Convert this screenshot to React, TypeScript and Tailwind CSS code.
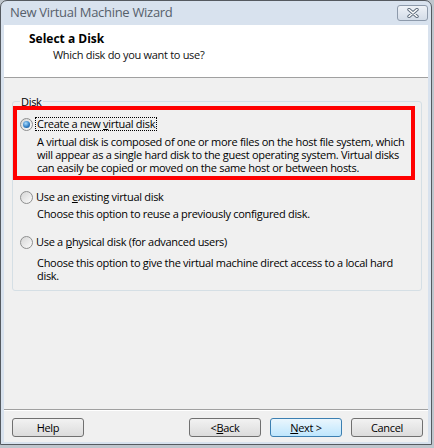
import React from "react";

const font = { fontFamily: '"Open Sans", "Noto Sans", sans-serif' };

function Radio({ checked }: { checked?: boolean }) {
  return (
    <span className="w-[13px] h-[13px] rounded-full border border-[#8e8f8f] bg-gradient-to-br from-[#d6d6d6] to-[#fbfbfb] flex items-center justify-center shrink-0">
      {checked && (
        <span className="w-[7px] h-[7px] rounded-full bg-[radial-gradient(circle_at_40%_35%,#a9dcff,#2a78c0_60%,#1d4f86)]" />
      )}
    </span>
  );
}

function Btn({ children, primary }: { children: React.ReactNode; primary?: boolean }) {
  return (
    <button
      className={`w-[72px] h-[19px] rounded-[3px] border text-[11px] tracking-[-0.3px] leading-none text-black flex items-center justify-center ${
        primary
          ? "border-[#3c7fb1] bg-gradient-to-b from-[#eaf6fd] to-[#bee6fd]"
          : "border-[#707070] bg-gradient-to-b from-[#f2f2f2] to-[#dcdcdc]"
      }`}
    >
      {children}
    </button>
  );
}

export default function App() {
  return (
    <div className="relative w-[434px] h-[448px] bg-[#bfc6cd] overflow-hidden" style={font}>
      <div className="w-[432px] h-[445px] rounded-t-[7px] border border-[#555a60] bg-[#d8e2ee] flex flex-col">
        {/* title bar */}
        <div className="h-[24px] flex items-center justify-between pl-[9px] pr-[3px]">
          <span className="text-[13px] tracking-[-0.3px] text-[#56606b]">New Virtual Machine Wizard</span>
          <span className="w-[31px] h-[16px] rounded-[3px] border border-[#8d9aab] bg-gradient-to-b from-[#eef2f7] to-[#d3dce8] flex items-center justify-center">
            <svg width="14" height="10" viewBox="0 0 14 10">
              <path d="M3 1.5 L11 8.5 M11 1.5 L3 8.5" stroke="#5d6b7b" strokeWidth="3.4" strokeLinecap="round" />
              <path d="M3 1.5 L11 8.5 M11 1.5 L3 8.5" stroke="#ffffff" strokeWidth="1.6" strokeLinecap="round" />
            </svg>
          </span>
        </div>

        <div className="flex-1 mx-[3px] mb-[2px] flex flex-col">
          {/* header */}
          <div className="h-[53px] bg-white border-b border-[#a0a0a0] pl-[25px] pt-[6px]">
            <div className="text-[12px] font-bold text-black leading-[16px]">Select a Disk</div>
            <div className="text-[11px] tracking-[-0.3px] text-[#111] leading-[16px] pl-[24px]">Which disk do you want to use?</div>
          </div>

          {/* body */}
          <div className="flex-1 bg-[#f0f0f0] flex flex-col text-[11px] tracking-[-0.3px] text-black">
            <fieldset className="mt-[17px] ml-[8px] mr-[6px] h-[196px] border border-[#d5dfe5] rounded-[3px] px-[7px] pb-[6px]">
              <legend className="px-[1px] leading-[13px]">Disk</legend>
              <div className="flex items-center gap-[2px] mt-[9px] h-[14px]">
                <Radio checked />
                <span className="border border-dotted border-black px-[1px] leading-[12px]">
                  Create a new <span className="underline">v</span>irtual disk
                </span>
              </div>
              <p className="pl-[17px] mt-[4px] leading-[13px] whitespace-nowrap">
                A virtual disk is composed of one or more files on the host file system, which
                <br />
                will appear as a single hard disk to the guest operating system. Virtual disks
                <br />
                can easily be copied or moved on the same host or between hosts.
              </p>

              <div className="flex items-center gap-[3px] mt-[16px] h-[14px]">
                <Radio />
                <span>
                  Use an <span className="underline">e</span>xisting virtual disk
                </span>
              </div>
              <p className="pl-[17px] mt-[3px] leading-[13px]">Choose this option to reuse a previously configured disk.</p>

              <div className="flex items-center gap-[3px] mt-[15px] h-[14px]">
                <Radio />
                <span>
                  Use a <span className="underline">p</span>hysical disk (for advanced users)
                </span>
              </div>
              <p className="pl-[17px] mt-[7px] leading-[13px] whitespace-nowrap">
                Choose this option to give the virtual machine direct access to a local hard
                <br />
                disk.
              </p>
            </fieldset>

            <div className="flex-1" />

            <div className="border-t border-[#a0a0a0] shadow-[inset_0_1px_0_#ffffff] flex items-center pl-[8px] pr-[5px] pt-[8px] pb-[5px]">
              <Btn>Help</Btn>
              <div className="flex-1" />
              <div className="flex gap-[9px]">
                <Btn>
                  &lt; <span className="underline">B</span>ack
                </Btn>
                <Btn primary>
                  <span className="underline">N</span>ext &gt;
                </Btn>
                <Btn>Cancel</Btn>
              </div>
            </div>
          </div>
        </div>
      </div>

      {/* red annotation box */}
      <div className="absolute left-[13px] top-[106px] w-[402px] h-[74px] border-4 border-[#ff0000]" />
    </div>
  );
}
